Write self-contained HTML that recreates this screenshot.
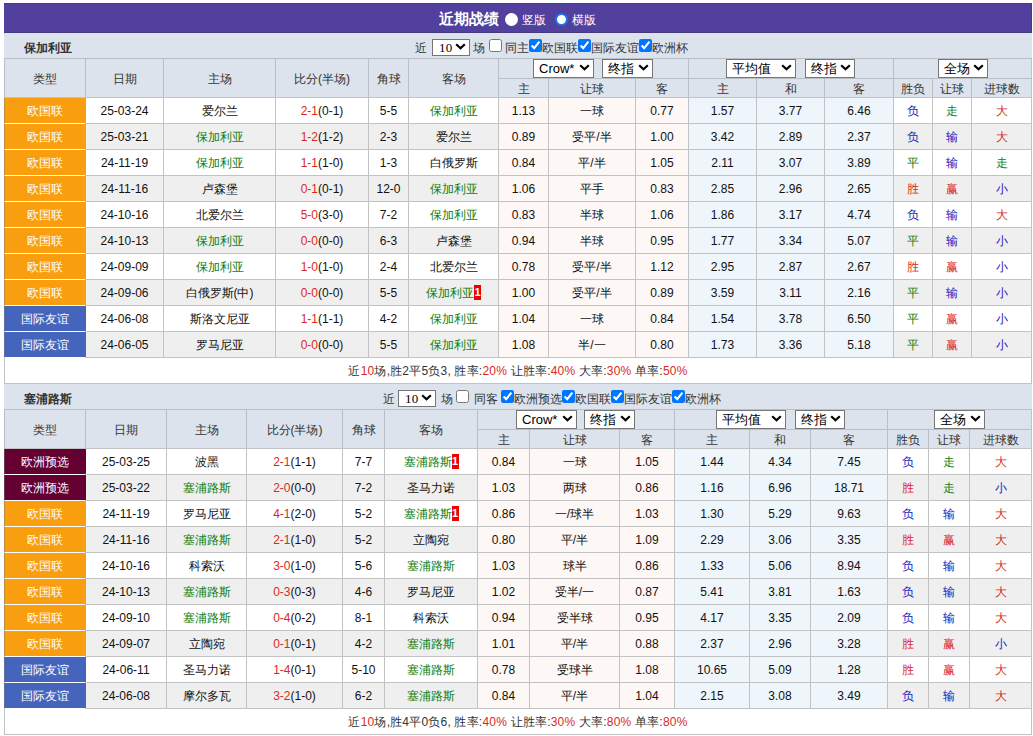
<!DOCTYPE html><html><head><meta charset="utf-8"><style>
*{margin:0;padding:0}
html,body{width:1033px;height:736px;overflow:hidden;background:#fff}
body{position:relative;font-family:"Liberation Sans",sans-serif;font-size:12px;color:#222}
body>div,body>span{position:absolute;white-space:nowrap;overflow:hidden}
.ttl{color:#fff;line-height:30px;font-size:12px}
.rad{position:absolute;width:13px;height:13px;border-radius:50%;background:#fff;box-sizing:border-box}
.rad.on{border:2px solid #1a73e8;background:#fff}
.ct{line-height:25px;color:#333}
.cb{position:absolute;width:13px;height:13px;margin:0}
.sm{position:absolute!important;height:17px!important;line-height:15px!important;border-radius:2px}
.sel{display:inline-block;box-sizing:border-box;height:17px;border:1px solid #767676;border-radius:0;background:#fff;color:#000;line-height:15px;text-align:left;padding-left:4px;position:relative;vertical-align:middle;font-size:13px}
.chev{position:absolute;right:3px;top:3px}
.hs .chev{top:4px;right:3px}
.mono{font-family:'Liberation Serif',serif;font-size:13px;letter-spacing:0.3px;position:absolute;left:6px;top:0px}
.sel.hs{position:absolute;height:19px;line-height:17px;font-size:13px;padding-left:5px}
.sum{text-align:center;line-height:27px;color:#333;letter-spacing:0.2px}
.rc{display:inline-block;background:#e00;color:#fff;font-size:12px;line-height:15px;width:7px;text-align:center;vertical-align:1px;font-weight:bold;font-size:11px}
</style></head><body><div style="left:4px;top:3px;width:1028px;height:30px;background:#52409e;box-sizing:border-box;border:1px solid #463a7c;border-left:none"></div><div class="ttl" style="left:439px;top:4px;height:30px;font-size:15px;font-weight:bold">近期战绩</div><div class="rad" style="left:505px;top:13px"></div><div class="ttl" style="left:522px;top:5px;height:30px">竖版</div><div class="rad on" style="left:555px;top:13px"></div><div class="ttl" style="left:572px;top:5px;height:30px">横版</div><div style="left:4px;top:33px;width:1028px;height:25px;background:#dce3ec"></div><div style="left:24px;top:36px;width:100px;height:22px;line-height:25px;font-weight:bold;color:#333">保加利亚</div><div class="ct" style="left:415px;top:36px;height:22px">近</div><span class="sel sm" style="left:432px;top:39px;width:38px"><span class="mono">10</span><svg class="chev" width="11" height="7" viewBox="0 0 11 7"><path d="M1.2 1.2 L5.5 5.3 L9.8 1.2" stroke="#000" stroke-width="2.2" fill="none"/></svg></span><div class="ct" style="left:473px;top:36px;height:22px">场</div><input type="checkbox" class="cb" style="left:489px;top:39px"><div class="ct" style="left:505px;top:36px;height:22px">同主</div><input type="checkbox" class="cb" style="left:529px;top:39px" checked><div class="ct" style="left:542px;top:36px;height:22px">欧国联</div><input type="checkbox" class="cb" style="left:578px;top:39px" checked><div class="ct" style="left:591px;top:36px;height:22px">国际友谊</div><input type="checkbox" class="cb" style="left:639px;top:39px" checked><div class="ct" style="left:652px;top:36px;height:22px">欧洲杯</div><div style="left:4px;top:58px;width:1028px;height:39px;background:#dce3ec"></div><div style="left:5px;top:59px;width:80px;height:38px;color:#333;line-height:40px;text-align:center;">类型</div><div style="left:86px;top:59px;width:77px;height:38px;color:#333;line-height:40px;text-align:center;">日期</div><div style="left:164px;top:59px;width:111px;height:38px;color:#333;line-height:40px;text-align:center;">主场</div><div style="left:276px;top:59px;width:92px;height:38px;color:#333;line-height:40px;text-align:center;">比分(半场)</div><div style="left:369px;top:59px;width:39px;height:38px;color:#333;line-height:40px;text-align:center;">角球</div><div style="left:409px;top:59px;width:89px;height:38px;color:#333;line-height:40px;text-align:center;">客场</div><div style="left:499px;top:79px;width:49px;height:18px;color:#333;line-height:20px;text-align:center;">主</div><div style="left:549px;top:79px;width:86px;height:18px;color:#333;line-height:20px;text-align:center;">让球</div><div style="left:636px;top:79px;width:52px;height:18px;color:#333;line-height:20px;text-align:center;">客</div><div style="left:689px;top:79px;width:67px;height:18px;color:#333;line-height:20px;text-align:center;">主</div><div style="left:757px;top:79px;width:67px;height:18px;color:#333;line-height:20px;text-align:center;">和</div><div style="left:825px;top:79px;width:68px;height:18px;color:#333;line-height:20px;text-align:center;">客</div><div style="left:894px;top:79px;width:38px;height:18px;color:#333;line-height:20px;text-align:center;">胜负</div><div style="left:933px;top:79px;width:38px;height:18px;color:#333;line-height:20px;text-align:center;">让球</div><div style="left:972px;top:79px;width:59px;height:18px;color:#333;line-height:20px;text-align:center;">进球数</div><div style="left:4px;top:98px;width:82px;height:25px;background:#f99e0e;color:#fff;line-height:27px;text-align:center;padding-right:1px;box-sizing:border-box">欧国联</div><div style="left:86px;top:98px;width:77px;height:25px;background:#fff;color:#111;line-height:27px;text-align:center;">25-03-24</div><div style="left:164px;top:98px;width:111px;height:25px;background:#fff;color:#111;line-height:27px;text-align:center;">爱尔兰</div><div style="left:276px;top:98px;width:92px;height:25px;background:#fff;color:#111;line-height:27px;text-align:center;"><span style="color:#d82a1c">2-1</span>(0-1)</div><div style="left:369px;top:98px;width:39px;height:25px;background:#fff;color:#111;line-height:27px;text-align:center;">5-5</div><div style="left:409px;top:98px;width:89px;height:25px;background:#fff;color:#111;line-height:27px;text-align:center;"><span style="color:#118011">保加利亚</span></div><div style="left:499px;top:98px;width:49px;height:25px;background:#fdf8f5;color:#111;line-height:27px;text-align:center;">1.13</div><div style="left:549px;top:98px;width:86px;height:25px;background:#fdf8f5;color:#111;line-height:27px;text-align:center;">一球</div><div style="left:636px;top:98px;width:52px;height:25px;background:#fdf8f5;color:#111;line-height:27px;text-align:center;">0.77</div><div style="left:689px;top:98px;width:67px;height:25px;background:#eef5fb;color:#111;line-height:27px;text-align:center;">1.57</div><div style="left:757px;top:98px;width:67px;height:25px;background:#eef5fb;color:#111;line-height:27px;text-align:center;">3.77</div><div style="left:825px;top:98px;width:68px;height:25px;background:#eef5fb;color:#111;line-height:27px;text-align:center;">6.46</div><div style="left:894px;top:98px;width:38px;height:25px;background:#fff;color:#1818c0;line-height:27px;text-align:center;">负</div><div style="left:933px;top:98px;width:38px;height:25px;background:#fff;color:#118011;line-height:27px;text-align:center;">走</div><div style="left:972px;top:98px;width:59px;height:25px;background:#fff;color:#d82a1c;line-height:27px;text-align:center;">大</div><div style="left:4px;top:124px;width:82px;height:25px;background:#f99e0e;color:#fff;line-height:27px;text-align:center;padding-right:1px;box-sizing:border-box">欧国联</div><div style="left:86px;top:124px;width:77px;height:25px;background:#efefef;color:#111;line-height:27px;text-align:center;">25-03-21</div><div style="left:164px;top:124px;width:111px;height:25px;background:#efefef;color:#111;line-height:27px;text-align:center;"><span style="color:#118011">保加利亚</span></div><div style="left:276px;top:124px;width:92px;height:25px;background:#efefef;color:#111;line-height:27px;text-align:center;"><span style="color:#d82a1c">1-2</span>(1-2)</div><div style="left:369px;top:124px;width:39px;height:25px;background:#efefef;color:#111;line-height:27px;text-align:center;">2-3</div><div style="left:409px;top:124px;width:89px;height:25px;background:#efefef;color:#111;line-height:27px;text-align:center;">爱尔兰</div><div style="left:499px;top:124px;width:49px;height:25px;background:#fdf8f5;color:#111;line-height:27px;text-align:center;">0.89</div><div style="left:549px;top:124px;width:86px;height:25px;background:#fdf8f5;color:#111;line-height:27px;text-align:center;">受平/半</div><div style="left:636px;top:124px;width:52px;height:25px;background:#fdf8f5;color:#111;line-height:27px;text-align:center;">1.00</div><div style="left:689px;top:124px;width:67px;height:25px;background:#eef5fb;color:#111;line-height:27px;text-align:center;">3.42</div><div style="left:757px;top:124px;width:67px;height:25px;background:#eef5fb;color:#111;line-height:27px;text-align:center;">2.89</div><div style="left:825px;top:124px;width:68px;height:25px;background:#eef5fb;color:#111;line-height:27px;text-align:center;">2.37</div><div style="left:894px;top:124px;width:38px;height:25px;background:#efefef;color:#1818c0;line-height:27px;text-align:center;">负</div><div style="left:933px;top:124px;width:38px;height:25px;background:#efefef;color:#1818c0;line-height:27px;text-align:center;">输</div><div style="left:972px;top:124px;width:59px;height:25px;background:#efefef;color:#d82a1c;line-height:27px;text-align:center;">大</div><div style="left:4px;top:150px;width:82px;height:25px;background:#f99e0e;color:#fff;line-height:27px;text-align:center;padding-right:1px;box-sizing:border-box">欧国联</div><div style="left:86px;top:150px;width:77px;height:25px;background:#fff;color:#111;line-height:27px;text-align:center;">24-11-19</div><div style="left:164px;top:150px;width:111px;height:25px;background:#fff;color:#111;line-height:27px;text-align:center;"><span style="color:#118011">保加利亚</span></div><div style="left:276px;top:150px;width:92px;height:25px;background:#fff;color:#111;line-height:27px;text-align:center;"><span style="color:#d82a1c">1-1</span>(1-0)</div><div style="left:369px;top:150px;width:39px;height:25px;background:#fff;color:#111;line-height:27px;text-align:center;">1-3</div><div style="left:409px;top:150px;width:89px;height:25px;background:#fff;color:#111;line-height:27px;text-align:center;">白俄罗斯</div><div style="left:499px;top:150px;width:49px;height:25px;background:#fdf8f5;color:#111;line-height:27px;text-align:center;">0.84</div><div style="left:549px;top:150px;width:86px;height:25px;background:#fdf8f5;color:#111;line-height:27px;text-align:center;">平/半</div><div style="left:636px;top:150px;width:52px;height:25px;background:#fdf8f5;color:#111;line-height:27px;text-align:center;">1.05</div><div style="left:689px;top:150px;width:67px;height:25px;background:#eef5fb;color:#111;line-height:27px;text-align:center;">2.11</div><div style="left:757px;top:150px;width:67px;height:25px;background:#eef5fb;color:#111;line-height:27px;text-align:center;">3.07</div><div style="left:825px;top:150px;width:68px;height:25px;background:#eef5fb;color:#111;line-height:27px;text-align:center;">3.89</div><div style="left:894px;top:150px;width:38px;height:25px;background:#fff;color:#118011;line-height:27px;text-align:center;">平</div><div style="left:933px;top:150px;width:38px;height:25px;background:#fff;color:#1818c0;line-height:27px;text-align:center;">输</div><div style="left:972px;top:150px;width:59px;height:25px;background:#fff;color:#118011;line-height:27px;text-align:center;">走</div><div style="left:4px;top:176px;width:82px;height:25px;background:#f99e0e;color:#fff;line-height:27px;text-align:center;padding-right:1px;box-sizing:border-box">欧国联</div><div style="left:86px;top:176px;width:77px;height:25px;background:#efefef;color:#111;line-height:27px;text-align:center;">24-11-16</div><div style="left:164px;top:176px;width:111px;height:25px;background:#efefef;color:#111;line-height:27px;text-align:center;">卢森堡</div><div style="left:276px;top:176px;width:92px;height:25px;background:#efefef;color:#111;line-height:27px;text-align:center;"><span style="color:#d82a1c">0-1</span>(0-1)</div><div style="left:369px;top:176px;width:39px;height:25px;background:#efefef;color:#111;line-height:27px;text-align:center;">12-0</div><div style="left:409px;top:176px;width:89px;height:25px;background:#efefef;color:#111;line-height:27px;text-align:center;"><span style="color:#118011">保加利亚</span></div><div style="left:499px;top:176px;width:49px;height:25px;background:#fdf8f5;color:#111;line-height:27px;text-align:center;">1.06</div><div style="left:549px;top:176px;width:86px;height:25px;background:#fdf8f5;color:#111;line-height:27px;text-align:center;">平手</div><div style="left:636px;top:176px;width:52px;height:25px;background:#fdf8f5;color:#111;line-height:27px;text-align:center;">0.83</div><div style="left:689px;top:176px;width:67px;height:25px;background:#eef5fb;color:#111;line-height:27px;text-align:center;">2.85</div><div style="left:757px;top:176px;width:67px;height:25px;background:#eef5fb;color:#111;line-height:27px;text-align:center;">2.96</div><div style="left:825px;top:176px;width:68px;height:25px;background:#eef5fb;color:#111;line-height:27px;text-align:center;">2.65</div><div style="left:894px;top:176px;width:38px;height:25px;background:#efefef;color:#d82a1c;line-height:27px;text-align:center;">胜</div><div style="left:933px;top:176px;width:38px;height:25px;background:#efefef;color:#d82a1c;line-height:27px;text-align:center;">赢</div><div style="left:972px;top:176px;width:59px;height:25px;background:#efefef;color:#1818c0;line-height:27px;text-align:center;">小</div><div style="left:4px;top:202px;width:82px;height:25px;background:#f99e0e;color:#fff;line-height:27px;text-align:center;padding-right:1px;box-sizing:border-box">欧国联</div><div style="left:86px;top:202px;width:77px;height:25px;background:#fff;color:#111;line-height:27px;text-align:center;">24-10-16</div><div style="left:164px;top:202px;width:111px;height:25px;background:#fff;color:#111;line-height:27px;text-align:center;">北爱尔兰</div><div style="left:276px;top:202px;width:92px;height:25px;background:#fff;color:#111;line-height:27px;text-align:center;"><span style="color:#d82a1c">5-0</span>(3-0)</div><div style="left:369px;top:202px;width:39px;height:25px;background:#fff;color:#111;line-height:27px;text-align:center;">7-2</div><div style="left:409px;top:202px;width:89px;height:25px;background:#fff;color:#111;line-height:27px;text-align:center;"><span style="color:#118011">保加利亚</span></div><div style="left:499px;top:202px;width:49px;height:25px;background:#fdf8f5;color:#111;line-height:27px;text-align:center;">0.83</div><div style="left:549px;top:202px;width:86px;height:25px;background:#fdf8f5;color:#111;line-height:27px;text-align:center;">半球</div><div style="left:636px;top:202px;width:52px;height:25px;background:#fdf8f5;color:#111;line-height:27px;text-align:center;">1.06</div><div style="left:689px;top:202px;width:67px;height:25px;background:#eef5fb;color:#111;line-height:27px;text-align:center;">1.86</div><div style="left:757px;top:202px;width:67px;height:25px;background:#eef5fb;color:#111;line-height:27px;text-align:center;">3.17</div><div style="left:825px;top:202px;width:68px;height:25px;background:#eef5fb;color:#111;line-height:27px;text-align:center;">4.74</div><div style="left:894px;top:202px;width:38px;height:25px;background:#fff;color:#1818c0;line-height:27px;text-align:center;">负</div><div style="left:933px;top:202px;width:38px;height:25px;background:#fff;color:#1818c0;line-height:27px;text-align:center;">输</div><div style="left:972px;top:202px;width:59px;height:25px;background:#fff;color:#d82a1c;line-height:27px;text-align:center;">大</div><div style="left:4px;top:228px;width:82px;height:25px;background:#f99e0e;color:#fff;line-height:27px;text-align:center;padding-right:1px;box-sizing:border-box">欧国联</div><div style="left:86px;top:228px;width:77px;height:25px;background:#efefef;color:#111;line-height:27px;text-align:center;">24-10-13</div><div style="left:164px;top:228px;width:111px;height:25px;background:#efefef;color:#111;line-height:27px;text-align:center;"><span style="color:#118011">保加利亚</span></div><div style="left:276px;top:228px;width:92px;height:25px;background:#efefef;color:#111;line-height:27px;text-align:center;"><span style="color:#d82a1c">0-0</span>(0-0)</div><div style="left:369px;top:228px;width:39px;height:25px;background:#efefef;color:#111;line-height:27px;text-align:center;">6-3</div><div style="left:409px;top:228px;width:89px;height:25px;background:#efefef;color:#111;line-height:27px;text-align:center;">卢森堡</div><div style="left:499px;top:228px;width:49px;height:25px;background:#fdf8f5;color:#111;line-height:27px;text-align:center;">0.94</div><div style="left:549px;top:228px;width:86px;height:25px;background:#fdf8f5;color:#111;line-height:27px;text-align:center;">半球</div><div style="left:636px;top:228px;width:52px;height:25px;background:#fdf8f5;color:#111;line-height:27px;text-align:center;">0.95</div><div style="left:689px;top:228px;width:67px;height:25px;background:#eef5fb;color:#111;line-height:27px;text-align:center;">1.77</div><div style="left:757px;top:228px;width:67px;height:25px;background:#eef5fb;color:#111;line-height:27px;text-align:center;">3.34</div><div style="left:825px;top:228px;width:68px;height:25px;background:#eef5fb;color:#111;line-height:27px;text-align:center;">5.07</div><div style="left:894px;top:228px;width:38px;height:25px;background:#efefef;color:#118011;line-height:27px;text-align:center;">平</div><div style="left:933px;top:228px;width:38px;height:25px;background:#efefef;color:#1818c0;line-height:27px;text-align:center;">输</div><div style="left:972px;top:228px;width:59px;height:25px;background:#efefef;color:#1818c0;line-height:27px;text-align:center;">小</div><div style="left:4px;top:254px;width:82px;height:25px;background:#f99e0e;color:#fff;line-height:27px;text-align:center;padding-right:1px;box-sizing:border-box">欧国联</div><div style="left:86px;top:254px;width:77px;height:25px;background:#fff;color:#111;line-height:27px;text-align:center;">24-09-09</div><div style="left:164px;top:254px;width:111px;height:25px;background:#fff;color:#111;line-height:27px;text-align:center;"><span style="color:#118011">保加利亚</span></div><div style="left:276px;top:254px;width:92px;height:25px;background:#fff;color:#111;line-height:27px;text-align:center;"><span style="color:#d82a1c">1-0</span>(1-0)</div><div style="left:369px;top:254px;width:39px;height:25px;background:#fff;color:#111;line-height:27px;text-align:center;">2-4</div><div style="left:409px;top:254px;width:89px;height:25px;background:#fff;color:#111;line-height:27px;text-align:center;">北爱尔兰</div><div style="left:499px;top:254px;width:49px;height:25px;background:#fdf8f5;color:#111;line-height:27px;text-align:center;">0.78</div><div style="left:549px;top:254px;width:86px;height:25px;background:#fdf8f5;color:#111;line-height:27px;text-align:center;">受平/半</div><div style="left:636px;top:254px;width:52px;height:25px;background:#fdf8f5;color:#111;line-height:27px;text-align:center;">1.12</div><div style="left:689px;top:254px;width:67px;height:25px;background:#eef5fb;color:#111;line-height:27px;text-align:center;">2.95</div><div style="left:757px;top:254px;width:67px;height:25px;background:#eef5fb;color:#111;line-height:27px;text-align:center;">2.87</div><div style="left:825px;top:254px;width:68px;height:25px;background:#eef5fb;color:#111;line-height:27px;text-align:center;">2.67</div><div style="left:894px;top:254px;width:38px;height:25px;background:#fff;color:#d82a1c;line-height:27px;text-align:center;">胜</div><div style="left:933px;top:254px;width:38px;height:25px;background:#fff;color:#d82a1c;line-height:27px;text-align:center;">赢</div><div style="left:972px;top:254px;width:59px;height:25px;background:#fff;color:#1818c0;line-height:27px;text-align:center;">小</div><div style="left:4px;top:280px;width:82px;height:25px;background:#f99e0e;color:#fff;line-height:27px;text-align:center;padding-right:1px;box-sizing:border-box">欧国联</div><div style="left:86px;top:280px;width:77px;height:25px;background:#efefef;color:#111;line-height:27px;text-align:center;">24-09-06</div><div style="left:164px;top:280px;width:111px;height:25px;background:#efefef;color:#111;line-height:27px;text-align:center;">白俄罗斯(中)</div><div style="left:276px;top:280px;width:92px;height:25px;background:#efefef;color:#111;line-height:27px;text-align:center;"><span style="color:#d82a1c">0-0</span>(0-0)</div><div style="left:369px;top:280px;width:39px;height:25px;background:#efefef;color:#111;line-height:27px;text-align:center;">5-5</div><div style="left:409px;top:280px;width:89px;height:25px;background:#efefef;color:#111;line-height:27px;text-align:center;"><span style="color:#118011">保加利亚</span><b class="rc">1</b></div><div style="left:499px;top:280px;width:49px;height:25px;background:#fdf8f5;color:#111;line-height:27px;text-align:center;">1.00</div><div style="left:549px;top:280px;width:86px;height:25px;background:#fdf8f5;color:#111;line-height:27px;text-align:center;">受平/半</div><div style="left:636px;top:280px;width:52px;height:25px;background:#fdf8f5;color:#111;line-height:27px;text-align:center;">0.89</div><div style="left:689px;top:280px;width:67px;height:25px;background:#eef5fb;color:#111;line-height:27px;text-align:center;">3.59</div><div style="left:757px;top:280px;width:67px;height:25px;background:#eef5fb;color:#111;line-height:27px;text-align:center;">3.11</div><div style="left:825px;top:280px;width:68px;height:25px;background:#eef5fb;color:#111;line-height:27px;text-align:center;">2.16</div><div style="left:894px;top:280px;width:38px;height:25px;background:#efefef;color:#118011;line-height:27px;text-align:center;">平</div><div style="left:933px;top:280px;width:38px;height:25px;background:#efefef;color:#1818c0;line-height:27px;text-align:center;">输</div><div style="left:972px;top:280px;width:59px;height:25px;background:#efefef;color:#1818c0;line-height:27px;text-align:center;">小</div><div style="left:4px;top:306px;width:82px;height:25px;background:#4565bd;color:#fff;line-height:27px;text-align:center;padding-right:1px;box-sizing:border-box">国际友谊</div><div style="left:86px;top:306px;width:77px;height:25px;background:#fff;color:#111;line-height:27px;text-align:center;">24-06-08</div><div style="left:164px;top:306px;width:111px;height:25px;background:#fff;color:#111;line-height:27px;text-align:center;">斯洛文尼亚</div><div style="left:276px;top:306px;width:92px;height:25px;background:#fff;color:#111;line-height:27px;text-align:center;"><span style="color:#d82a1c">1-1</span>(1-1)</div><div style="left:369px;top:306px;width:39px;height:25px;background:#fff;color:#111;line-height:27px;text-align:center;">4-2</div><div style="left:409px;top:306px;width:89px;height:25px;background:#fff;color:#111;line-height:27px;text-align:center;"><span style="color:#118011">保加利亚</span></div><div style="left:499px;top:306px;width:49px;height:25px;background:#fdf8f5;color:#111;line-height:27px;text-align:center;">1.04</div><div style="left:549px;top:306px;width:86px;height:25px;background:#fdf8f5;color:#111;line-height:27px;text-align:center;">一球</div><div style="left:636px;top:306px;width:52px;height:25px;background:#fdf8f5;color:#111;line-height:27px;text-align:center;">0.84</div><div style="left:689px;top:306px;width:67px;height:25px;background:#eef5fb;color:#111;line-height:27px;text-align:center;">1.54</div><div style="left:757px;top:306px;width:67px;height:25px;background:#eef5fb;color:#111;line-height:27px;text-align:center;">3.78</div><div style="left:825px;top:306px;width:68px;height:25px;background:#eef5fb;color:#111;line-height:27px;text-align:center;">6.50</div><div style="left:894px;top:306px;width:38px;height:25px;background:#fff;color:#118011;line-height:27px;text-align:center;">平</div><div style="left:933px;top:306px;width:38px;height:25px;background:#fff;color:#d82a1c;line-height:27px;text-align:center;">赢</div><div style="left:972px;top:306px;width:59px;height:25px;background:#fff;color:#1818c0;line-height:27px;text-align:center;">小</div><div style="left:4px;top:332px;width:82px;height:25px;background:#4565bd;color:#fff;line-height:27px;text-align:center;padding-right:1px;box-sizing:border-box">国际友谊</div><div style="left:86px;top:332px;width:77px;height:25px;background:#efefef;color:#111;line-height:27px;text-align:center;">24-06-05</div><div style="left:164px;top:332px;width:111px;height:25px;background:#efefef;color:#111;line-height:27px;text-align:center;">罗马尼亚</div><div style="left:276px;top:332px;width:92px;height:25px;background:#efefef;color:#111;line-height:27px;text-align:center;"><span style="color:#d82a1c">0-0</span>(0-0)</div><div style="left:369px;top:332px;width:39px;height:25px;background:#efefef;color:#111;line-height:27px;text-align:center;">5-5</div><div style="left:409px;top:332px;width:89px;height:25px;background:#efefef;color:#111;line-height:27px;text-align:center;"><span style="color:#118011">保加利亚</span></div><div style="left:499px;top:332px;width:49px;height:25px;background:#fdf8f5;color:#111;line-height:27px;text-align:center;">1.08</div><div style="left:549px;top:332px;width:86px;height:25px;background:#fdf8f5;color:#111;line-height:27px;text-align:center;">半/一</div><div style="left:636px;top:332px;width:52px;height:25px;background:#fdf8f5;color:#111;line-height:27px;text-align:center;">0.80</div><div style="left:689px;top:332px;width:67px;height:25px;background:#eef5fb;color:#111;line-height:27px;text-align:center;">1.73</div><div style="left:757px;top:332px;width:67px;height:25px;background:#eef5fb;color:#111;line-height:27px;text-align:center;">3.36</div><div style="left:825px;top:332px;width:68px;height:25px;background:#eef5fb;color:#111;line-height:27px;text-align:center;">5.18</div><div style="left:894px;top:332px;width:38px;height:25px;background:#efefef;color:#118011;line-height:27px;text-align:center;">平</div><div style="left:933px;top:332px;width:38px;height:25px;background:#efefef;color:#d82a1c;line-height:27px;text-align:center;">赢</div><div style="left:972px;top:332px;width:59px;height:25px;background:#efefef;color:#1818c0;line-height:27px;text-align:center;">小</div><div style="left:5px;top:358px;width:1026px;height:25px;background:#fff;line-height:25px;text-align:right;padding-right:0"></div><div class="sum" style="left:5px;top:358px;width:1026px;height:25px">近<span style="color:#d82a1c">10</span>场,胜2平5负3, 胜率:<span style="color:#d82a1c">20%</span> 让胜率:<span style="color:#d82a1c">40%</span> 大率:<span style="color:#d82a1c">30%</span> 单率:<span style="color:#d82a1c">50%</span></div><div style="left:4px;top:58px;width:1028px;height:1px;background:#b9bfc7"></div><div style="left:498px;top:78px;width:534px;height:1px;background:#b9bfc7"></div><div style="left:4px;top:97px;width:1028px;height:1px;background:#c2c2c2"></div><div style="left:85px;top:123px;width:947px;height:1px;background:#c2c2c2"></div><div style="left:5px;top:123px;width:80px;height:1px;background:rgba(255,255,255,0.5)"></div><div style="left:85px;top:149px;width:947px;height:1px;background:#c2c2c2"></div><div style="left:5px;top:149px;width:80px;height:1px;background:rgba(255,255,255,0.5)"></div><div style="left:85px;top:175px;width:947px;height:1px;background:#c2c2c2"></div><div style="left:5px;top:175px;width:80px;height:1px;background:rgba(255,255,255,0.5)"></div><div style="left:85px;top:201px;width:947px;height:1px;background:#c2c2c2"></div><div style="left:5px;top:201px;width:80px;height:1px;background:rgba(255,255,255,0.5)"></div><div style="left:85px;top:227px;width:947px;height:1px;background:#c2c2c2"></div><div style="left:5px;top:227px;width:80px;height:1px;background:rgba(255,255,255,0.5)"></div><div style="left:85px;top:253px;width:947px;height:1px;background:#c2c2c2"></div><div style="left:5px;top:253px;width:80px;height:1px;background:rgba(255,255,255,0.5)"></div><div style="left:85px;top:279px;width:947px;height:1px;background:#c2c2c2"></div><div style="left:5px;top:279px;width:80px;height:1px;background:rgba(255,255,255,0.5)"></div><div style="left:85px;top:305px;width:947px;height:1px;background:#c2c2c2"></div><div style="left:5px;top:305px;width:80px;height:1px;background:rgba(255,255,255,0.5)"></div><div style="left:85px;top:331px;width:947px;height:1px;background:#c2c2c2"></div><div style="left:5px;top:331px;width:80px;height:1px;background:rgba(255,255,255,0.5)"></div><div style="left:85px;top:357px;width:947px;height:1px;background:#c2c2c2"></div><div style="left:5px;top:357px;width:80px;height:1px;background:rgba(255,255,255,0.5)"></div><div style="left:4px;top:383px;width:1028px;height:1px;background:#c2c2c2"></div><div style="left:4px;top:58px;width:1px;height:40px;background:#b9bfc7"></div><div style="left:4px;top:98px;width:1px;height:260px;background:rgba(120,120,120,0.45)"></div><div style="left:4px;top:357px;width:1px;height:27px;background:#c2c2c2"></div><div style="left:85px;top:58px;width:1px;height:40px;background:#b9bfc7"></div><div style="left:163px;top:58px;width:1px;height:39px;background:#b9bfc7"></div><div style="left:163px;top:97px;width:1px;height:261px;background:#c2c2c2"></div><div style="left:275px;top:58px;width:1px;height:39px;background:#b9bfc7"></div><div style="left:275px;top:97px;width:1px;height:261px;background:#c2c2c2"></div><div style="left:368px;top:58px;width:1px;height:39px;background:#b9bfc7"></div><div style="left:368px;top:97px;width:1px;height:261px;background:#c2c2c2"></div><div style="left:408px;top:58px;width:1px;height:39px;background:#b9bfc7"></div><div style="left:408px;top:97px;width:1px;height:261px;background:#c2c2c2"></div><div style="left:498px;top:58px;width:1px;height:39px;background:#b9bfc7"></div><div style="left:498px;top:97px;width:1px;height:261px;background:#c2c2c2"></div><div style="left:548px;top:78px;width:1px;height:19px;background:#b9bfc7"></div><div style="left:548px;top:97px;width:1px;height:261px;background:#c2c2c2"></div><div style="left:635px;top:78px;width:1px;height:19px;background:#b9bfc7"></div><div style="left:635px;top:97px;width:1px;height:261px;background:#c2c2c2"></div><div style="left:688px;top:58px;width:1px;height:39px;background:#b9bfc7"></div><div style="left:688px;top:97px;width:1px;height:261px;background:#c2c2c2"></div><div style="left:756px;top:78px;width:1px;height:19px;background:#b9bfc7"></div><div style="left:756px;top:97px;width:1px;height:261px;background:#c2c2c2"></div><div style="left:824px;top:78px;width:1px;height:19px;background:#b9bfc7"></div><div style="left:824px;top:97px;width:1px;height:261px;background:#c2c2c2"></div><div style="left:893px;top:58px;width:1px;height:39px;background:#b9bfc7"></div><div style="left:893px;top:97px;width:1px;height:261px;background:#c2c2c2"></div><div style="left:932px;top:78px;width:1px;height:19px;background:#b9bfc7"></div><div style="left:932px;top:97px;width:1px;height:261px;background:#c2c2c2"></div><div style="left:971px;top:78px;width:1px;height:19px;background:#b9bfc7"></div><div style="left:971px;top:97px;width:1px;height:261px;background:#c2c2c2"></div><div style="left:1031px;top:58px;width:1px;height:326px;background:#c2c2c2"></div><div style="left:4px;top:384px;width:1028px;height:25px;background:#dce3ec"></div><div style="left:24px;top:387px;width:100px;height:22px;line-height:25px;font-weight:bold;color:#333">塞浦路斯</div><div class="ct" style="left:383px;top:387px;height:22px">近</div><span class="sel sm" style="left:398px;top:390px;width:38px"><span class="mono">10</span><svg class="chev" width="11" height="7" viewBox="0 0 11 7"><path d="M1.2 1.2 L5.5 5.3 L9.8 1.2" stroke="#000" stroke-width="2.2" fill="none"/></svg></span><div class="ct" style="left:441px;top:387px;height:22px">场</div><input type="checkbox" class="cb" style="left:456px;top:390px"><div class="ct" style="left:474px;top:387px;height:22px">同客</div><input type="checkbox" class="cb" style="left:501px;top:390px" checked><div class="ct" style="left:514px;top:387px;height:22px">欧洲预选</div><input type="checkbox" class="cb" style="left:562px;top:390px" checked><div class="ct" style="left:575px;top:387px;height:22px">欧国联</div><input type="checkbox" class="cb" style="left:611px;top:390px" checked><div class="ct" style="left:624px;top:387px;height:22px">国际友谊</div><input type="checkbox" class="cb" style="left:672px;top:390px" checked><div class="ct" style="left:685px;top:387px;height:22px">欧洲杯</div><div style="left:4px;top:409px;width:1028px;height:39px;background:#dce3ec"></div><div style="left:5px;top:410px;width:80px;height:38px;color:#333;line-height:40px;text-align:center;">类型</div><div style="left:86px;top:410px;width:80px;height:38px;color:#333;line-height:40px;text-align:center;">日期</div><div style="left:167px;top:410px;width:79px;height:38px;color:#333;line-height:40px;text-align:center;">主场</div><div style="left:247px;top:410px;width:95px;height:38px;color:#333;line-height:40px;text-align:center;">比分(半场)</div><div style="left:343px;top:410px;width:41px;height:38px;color:#333;line-height:40px;text-align:center;">角球</div><div style="left:385px;top:410px;width:92px;height:38px;color:#333;line-height:40px;text-align:center;">客场</div><div style="left:478px;top:430px;width:51px;height:18px;color:#333;line-height:20px;text-align:center;">主</div><div style="left:530px;top:430px;width:89px;height:18px;color:#333;line-height:20px;text-align:center;">让球</div><div style="left:620px;top:430px;width:54px;height:18px;color:#333;line-height:20px;text-align:center;">客</div><div style="left:675px;top:430px;width:74px;height:18px;color:#333;line-height:20px;text-align:center;">主</div><div style="left:750px;top:430px;width:60px;height:18px;color:#333;line-height:20px;text-align:center;">和</div><div style="left:811px;top:430px;width:76px;height:18px;color:#333;line-height:20px;text-align:center;">客</div><div style="left:888px;top:430px;width:40px;height:18px;color:#333;line-height:20px;text-align:center;">胜负</div><div style="left:929px;top:430px;width:40px;height:18px;color:#333;line-height:20px;text-align:center;">让球</div><div style="left:970px;top:430px;width:61px;height:18px;color:#333;line-height:20px;text-align:center;">进球数</div><div style="left:4px;top:449px;width:82px;height:25px;background:#650033;color:#fff;line-height:27px;text-align:center;padding-right:1px;box-sizing:border-box">欧洲预选</div><div style="left:86px;top:449px;width:80px;height:25px;background:#fff;color:#111;line-height:27px;text-align:center;">25-03-25</div><div style="left:167px;top:449px;width:79px;height:25px;background:#fff;color:#111;line-height:27px;text-align:center;">波黑</div><div style="left:247px;top:449px;width:95px;height:25px;background:#fff;color:#111;line-height:27px;text-align:center;"><span style="color:#d82a1c">2-1</span>(1-1)</div><div style="left:343px;top:449px;width:41px;height:25px;background:#fff;color:#111;line-height:27px;text-align:center;">7-7</div><div style="left:385px;top:449px;width:92px;height:25px;background:#fff;color:#111;line-height:27px;text-align:center;"><span style="color:#118011">塞浦路斯</span><b class="rc">1</b></div><div style="left:478px;top:449px;width:51px;height:25px;background:#fdf8f5;color:#111;line-height:27px;text-align:center;">0.84</div><div style="left:530px;top:449px;width:89px;height:25px;background:#fdf8f5;color:#111;line-height:27px;text-align:center;">一球</div><div style="left:620px;top:449px;width:54px;height:25px;background:#fdf8f5;color:#111;line-height:27px;text-align:center;">1.05</div><div style="left:675px;top:449px;width:74px;height:25px;background:#eef5fb;color:#111;line-height:27px;text-align:center;">1.44</div><div style="left:750px;top:449px;width:60px;height:25px;background:#eef5fb;color:#111;line-height:27px;text-align:center;">4.34</div><div style="left:811px;top:449px;width:76px;height:25px;background:#eef5fb;color:#111;line-height:27px;text-align:center;">7.45</div><div style="left:888px;top:449px;width:40px;height:25px;background:#fff;color:#1818c0;line-height:27px;text-align:center;">负</div><div style="left:929px;top:449px;width:40px;height:25px;background:#fff;color:#118011;line-height:27px;text-align:center;">走</div><div style="left:970px;top:449px;width:61px;height:25px;background:#fff;color:#d82a1c;line-height:27px;text-align:center;">大</div><div style="left:4px;top:475px;width:82px;height:25px;background:#650033;color:#fff;line-height:27px;text-align:center;padding-right:1px;box-sizing:border-box">欧洲预选</div><div style="left:86px;top:475px;width:80px;height:25px;background:#efefef;color:#111;line-height:27px;text-align:center;">25-03-22</div><div style="left:167px;top:475px;width:79px;height:25px;background:#efefef;color:#111;line-height:27px;text-align:center;"><span style="color:#118011">塞浦路斯</span></div><div style="left:247px;top:475px;width:95px;height:25px;background:#efefef;color:#111;line-height:27px;text-align:center;"><span style="color:#d82a1c">2-0</span>(0-0)</div><div style="left:343px;top:475px;width:41px;height:25px;background:#efefef;color:#111;line-height:27px;text-align:center;">7-2</div><div style="left:385px;top:475px;width:92px;height:25px;background:#efefef;color:#111;line-height:27px;text-align:center;">圣马力诺</div><div style="left:478px;top:475px;width:51px;height:25px;background:#fdf8f5;color:#111;line-height:27px;text-align:center;">1.03</div><div style="left:530px;top:475px;width:89px;height:25px;background:#fdf8f5;color:#111;line-height:27px;text-align:center;">两球</div><div style="left:620px;top:475px;width:54px;height:25px;background:#fdf8f5;color:#111;line-height:27px;text-align:center;">0.86</div><div style="left:675px;top:475px;width:74px;height:25px;background:#eef5fb;color:#111;line-height:27px;text-align:center;">1.16</div><div style="left:750px;top:475px;width:60px;height:25px;background:#eef5fb;color:#111;line-height:27px;text-align:center;">6.96</div><div style="left:811px;top:475px;width:76px;height:25px;background:#eef5fb;color:#111;line-height:27px;text-align:center;">18.71</div><div style="left:888px;top:475px;width:40px;height:25px;background:#efefef;color:#d82a1c;line-height:27px;text-align:center;">胜</div><div style="left:929px;top:475px;width:40px;height:25px;background:#efefef;color:#118011;line-height:27px;text-align:center;">走</div><div style="left:970px;top:475px;width:61px;height:25px;background:#efefef;color:#1818c0;line-height:27px;text-align:center;">小</div><div style="left:4px;top:501px;width:82px;height:25px;background:#f99e0e;color:#fff;line-height:27px;text-align:center;padding-right:1px;box-sizing:border-box">欧国联</div><div style="left:86px;top:501px;width:80px;height:25px;background:#fff;color:#111;line-height:27px;text-align:center;">24-11-19</div><div style="left:167px;top:501px;width:79px;height:25px;background:#fff;color:#111;line-height:27px;text-align:center;">罗马尼亚</div><div style="left:247px;top:501px;width:95px;height:25px;background:#fff;color:#111;line-height:27px;text-align:center;"><span style="color:#d82a1c">4-1</span>(2-0)</div><div style="left:343px;top:501px;width:41px;height:25px;background:#fff;color:#111;line-height:27px;text-align:center;">5-2</div><div style="left:385px;top:501px;width:92px;height:25px;background:#fff;color:#111;line-height:27px;text-align:center;"><span style="color:#118011">塞浦路斯</span><b class="rc">1</b></div><div style="left:478px;top:501px;width:51px;height:25px;background:#fdf8f5;color:#111;line-height:27px;text-align:center;">0.86</div><div style="left:530px;top:501px;width:89px;height:25px;background:#fdf8f5;color:#111;line-height:27px;text-align:center;">一/球半</div><div style="left:620px;top:501px;width:54px;height:25px;background:#fdf8f5;color:#111;line-height:27px;text-align:center;">1.03</div><div style="left:675px;top:501px;width:74px;height:25px;background:#eef5fb;color:#111;line-height:27px;text-align:center;">1.30</div><div style="left:750px;top:501px;width:60px;height:25px;background:#eef5fb;color:#111;line-height:27px;text-align:center;">5.29</div><div style="left:811px;top:501px;width:76px;height:25px;background:#eef5fb;color:#111;line-height:27px;text-align:center;">9.63</div><div style="left:888px;top:501px;width:40px;height:25px;background:#fff;color:#1818c0;line-height:27px;text-align:center;">负</div><div style="left:929px;top:501px;width:40px;height:25px;background:#fff;color:#1818c0;line-height:27px;text-align:center;">输</div><div style="left:970px;top:501px;width:61px;height:25px;background:#fff;color:#d82a1c;line-height:27px;text-align:center;">大</div><div style="left:4px;top:527px;width:82px;height:25px;background:#f99e0e;color:#fff;line-height:27px;text-align:center;padding-right:1px;box-sizing:border-box">欧国联</div><div style="left:86px;top:527px;width:80px;height:25px;background:#efefef;color:#111;line-height:27px;text-align:center;">24-11-16</div><div style="left:167px;top:527px;width:79px;height:25px;background:#efefef;color:#111;line-height:27px;text-align:center;"><span style="color:#118011">塞浦路斯</span></div><div style="left:247px;top:527px;width:95px;height:25px;background:#efefef;color:#111;line-height:27px;text-align:center;"><span style="color:#d82a1c">2-1</span>(1-0)</div><div style="left:343px;top:527px;width:41px;height:25px;background:#efefef;color:#111;line-height:27px;text-align:center;">5-2</div><div style="left:385px;top:527px;width:92px;height:25px;background:#efefef;color:#111;line-height:27px;text-align:center;">立陶宛</div><div style="left:478px;top:527px;width:51px;height:25px;background:#fdf8f5;color:#111;line-height:27px;text-align:center;">0.80</div><div style="left:530px;top:527px;width:89px;height:25px;background:#fdf8f5;color:#111;line-height:27px;text-align:center;">平/半</div><div style="left:620px;top:527px;width:54px;height:25px;background:#fdf8f5;color:#111;line-height:27px;text-align:center;">1.09</div><div style="left:675px;top:527px;width:74px;height:25px;background:#eef5fb;color:#111;line-height:27px;text-align:center;">2.29</div><div style="left:750px;top:527px;width:60px;height:25px;background:#eef5fb;color:#111;line-height:27px;text-align:center;">3.06</div><div style="left:811px;top:527px;width:76px;height:25px;background:#eef5fb;color:#111;line-height:27px;text-align:center;">3.35</div><div style="left:888px;top:527px;width:40px;height:25px;background:#efefef;color:#d82a1c;line-height:27px;text-align:center;">胜</div><div style="left:929px;top:527px;width:40px;height:25px;background:#efefef;color:#d82a1c;line-height:27px;text-align:center;">赢</div><div style="left:970px;top:527px;width:61px;height:25px;background:#efefef;color:#d82a1c;line-height:27px;text-align:center;">大</div><div style="left:4px;top:553px;width:82px;height:25px;background:#f99e0e;color:#fff;line-height:27px;text-align:center;padding-right:1px;box-sizing:border-box">欧国联</div><div style="left:86px;top:553px;width:80px;height:25px;background:#fff;color:#111;line-height:27px;text-align:center;">24-10-16</div><div style="left:167px;top:553px;width:79px;height:25px;background:#fff;color:#111;line-height:27px;text-align:center;">科索沃</div><div style="left:247px;top:553px;width:95px;height:25px;background:#fff;color:#111;line-height:27px;text-align:center;"><span style="color:#d82a1c">3-0</span>(1-0)</div><div style="left:343px;top:553px;width:41px;height:25px;background:#fff;color:#111;line-height:27px;text-align:center;">5-6</div><div style="left:385px;top:553px;width:92px;height:25px;background:#fff;color:#111;line-height:27px;text-align:center;"><span style="color:#118011">塞浦路斯</span></div><div style="left:478px;top:553px;width:51px;height:25px;background:#fdf8f5;color:#111;line-height:27px;text-align:center;">1.03</div><div style="left:530px;top:553px;width:89px;height:25px;background:#fdf8f5;color:#111;line-height:27px;text-align:center;">球半</div><div style="left:620px;top:553px;width:54px;height:25px;background:#fdf8f5;color:#111;line-height:27px;text-align:center;">0.86</div><div style="left:675px;top:553px;width:74px;height:25px;background:#eef5fb;color:#111;line-height:27px;text-align:center;">1.33</div><div style="left:750px;top:553px;width:60px;height:25px;background:#eef5fb;color:#111;line-height:27px;text-align:center;">5.06</div><div style="left:811px;top:553px;width:76px;height:25px;background:#eef5fb;color:#111;line-height:27px;text-align:center;">8.94</div><div style="left:888px;top:553px;width:40px;height:25px;background:#fff;color:#1818c0;line-height:27px;text-align:center;">负</div><div style="left:929px;top:553px;width:40px;height:25px;background:#fff;color:#1818c0;line-height:27px;text-align:center;">输</div><div style="left:970px;top:553px;width:61px;height:25px;background:#fff;color:#d82a1c;line-height:27px;text-align:center;">大</div><div style="left:4px;top:579px;width:82px;height:25px;background:#f99e0e;color:#fff;line-height:27px;text-align:center;padding-right:1px;box-sizing:border-box">欧国联</div><div style="left:86px;top:579px;width:80px;height:25px;background:#efefef;color:#111;line-height:27px;text-align:center;">24-10-13</div><div style="left:167px;top:579px;width:79px;height:25px;background:#efefef;color:#111;line-height:27px;text-align:center;"><span style="color:#118011">塞浦路斯</span></div><div style="left:247px;top:579px;width:95px;height:25px;background:#efefef;color:#111;line-height:27px;text-align:center;"><span style="color:#d82a1c">0-3</span>(0-3)</div><div style="left:343px;top:579px;width:41px;height:25px;background:#efefef;color:#111;line-height:27px;text-align:center;">4-6</div><div style="left:385px;top:579px;width:92px;height:25px;background:#efefef;color:#111;line-height:27px;text-align:center;">罗马尼亚</div><div style="left:478px;top:579px;width:51px;height:25px;background:#fdf8f5;color:#111;line-height:27px;text-align:center;">1.02</div><div style="left:530px;top:579px;width:89px;height:25px;background:#fdf8f5;color:#111;line-height:27px;text-align:center;">受半/一</div><div style="left:620px;top:579px;width:54px;height:25px;background:#fdf8f5;color:#111;line-height:27px;text-align:center;">0.87</div><div style="left:675px;top:579px;width:74px;height:25px;background:#eef5fb;color:#111;line-height:27px;text-align:center;">5.41</div><div style="left:750px;top:579px;width:60px;height:25px;background:#eef5fb;color:#111;line-height:27px;text-align:center;">3.81</div><div style="left:811px;top:579px;width:76px;height:25px;background:#eef5fb;color:#111;line-height:27px;text-align:center;">1.63</div><div style="left:888px;top:579px;width:40px;height:25px;background:#efefef;color:#1818c0;line-height:27px;text-align:center;">负</div><div style="left:929px;top:579px;width:40px;height:25px;background:#efefef;color:#1818c0;line-height:27px;text-align:center;">输</div><div style="left:970px;top:579px;width:61px;height:25px;background:#efefef;color:#d82a1c;line-height:27px;text-align:center;">大</div><div style="left:4px;top:605px;width:82px;height:25px;background:#f99e0e;color:#fff;line-height:27px;text-align:center;padding-right:1px;box-sizing:border-box">欧国联</div><div style="left:86px;top:605px;width:80px;height:25px;background:#fff;color:#111;line-height:27px;text-align:center;">24-09-10</div><div style="left:167px;top:605px;width:79px;height:25px;background:#fff;color:#111;line-height:27px;text-align:center;"><span style="color:#118011">塞浦路斯</span></div><div style="left:247px;top:605px;width:95px;height:25px;background:#fff;color:#111;line-height:27px;text-align:center;"><span style="color:#d82a1c">0-4</span>(0-2)</div><div style="left:343px;top:605px;width:41px;height:25px;background:#fff;color:#111;line-height:27px;text-align:center;">8-1</div><div style="left:385px;top:605px;width:92px;height:25px;background:#fff;color:#111;line-height:27px;text-align:center;">科索沃</div><div style="left:478px;top:605px;width:51px;height:25px;background:#fdf8f5;color:#111;line-height:27px;text-align:center;">0.94</div><div style="left:530px;top:605px;width:89px;height:25px;background:#fdf8f5;color:#111;line-height:27px;text-align:center;">受半球</div><div style="left:620px;top:605px;width:54px;height:25px;background:#fdf8f5;color:#111;line-height:27px;text-align:center;">0.95</div><div style="left:675px;top:605px;width:74px;height:25px;background:#eef5fb;color:#111;line-height:27px;text-align:center;">4.17</div><div style="left:750px;top:605px;width:60px;height:25px;background:#eef5fb;color:#111;line-height:27px;text-align:center;">3.35</div><div style="left:811px;top:605px;width:76px;height:25px;background:#eef5fb;color:#111;line-height:27px;text-align:center;">2.09</div><div style="left:888px;top:605px;width:40px;height:25px;background:#fff;color:#1818c0;line-height:27px;text-align:center;">负</div><div style="left:929px;top:605px;width:40px;height:25px;background:#fff;color:#1818c0;line-height:27px;text-align:center;">输</div><div style="left:970px;top:605px;width:61px;height:25px;background:#fff;color:#d82a1c;line-height:27px;text-align:center;">大</div><div style="left:4px;top:631px;width:82px;height:25px;background:#f99e0e;color:#fff;line-height:27px;text-align:center;padding-right:1px;box-sizing:border-box">欧国联</div><div style="left:86px;top:631px;width:80px;height:25px;background:#efefef;color:#111;line-height:27px;text-align:center;">24-09-07</div><div style="left:167px;top:631px;width:79px;height:25px;background:#efefef;color:#111;line-height:27px;text-align:center;">立陶宛</div><div style="left:247px;top:631px;width:95px;height:25px;background:#efefef;color:#111;line-height:27px;text-align:center;"><span style="color:#d82a1c">0-1</span>(0-1)</div><div style="left:343px;top:631px;width:41px;height:25px;background:#efefef;color:#111;line-height:27px;text-align:center;">4-2</div><div style="left:385px;top:631px;width:92px;height:25px;background:#efefef;color:#111;line-height:27px;text-align:center;"><span style="color:#118011">塞浦路斯</span></div><div style="left:478px;top:631px;width:51px;height:25px;background:#fdf8f5;color:#111;line-height:27px;text-align:center;">1.01</div><div style="left:530px;top:631px;width:89px;height:25px;background:#fdf8f5;color:#111;line-height:27px;text-align:center;">平/半</div><div style="left:620px;top:631px;width:54px;height:25px;background:#fdf8f5;color:#111;line-height:27px;text-align:center;">0.88</div><div style="left:675px;top:631px;width:74px;height:25px;background:#eef5fb;color:#111;line-height:27px;text-align:center;">2.37</div><div style="left:750px;top:631px;width:60px;height:25px;background:#eef5fb;color:#111;line-height:27px;text-align:center;">2.96</div><div style="left:811px;top:631px;width:76px;height:25px;background:#eef5fb;color:#111;line-height:27px;text-align:center;">3.28</div><div style="left:888px;top:631px;width:40px;height:25px;background:#efefef;color:#d82a1c;line-height:27px;text-align:center;">胜</div><div style="left:929px;top:631px;width:40px;height:25px;background:#efefef;color:#d82a1c;line-height:27px;text-align:center;">赢</div><div style="left:970px;top:631px;width:61px;height:25px;background:#efefef;color:#1818c0;line-height:27px;text-align:center;">小</div><div style="left:4px;top:657px;width:82px;height:25px;background:#4565bd;color:#fff;line-height:27px;text-align:center;padding-right:1px;box-sizing:border-box">国际友谊</div><div style="left:86px;top:657px;width:80px;height:25px;background:#fff;color:#111;line-height:27px;text-align:center;">24-06-11</div><div style="left:167px;top:657px;width:79px;height:25px;background:#fff;color:#111;line-height:27px;text-align:center;">圣马力诺</div><div style="left:247px;top:657px;width:95px;height:25px;background:#fff;color:#111;line-height:27px;text-align:center;"><span style="color:#d82a1c">1-4</span>(0-1)</div><div style="left:343px;top:657px;width:41px;height:25px;background:#fff;color:#111;line-height:27px;text-align:center;">5-10</div><div style="left:385px;top:657px;width:92px;height:25px;background:#fff;color:#111;line-height:27px;text-align:center;"><span style="color:#118011">塞浦路斯</span></div><div style="left:478px;top:657px;width:51px;height:25px;background:#fdf8f5;color:#111;line-height:27px;text-align:center;">0.78</div><div style="left:530px;top:657px;width:89px;height:25px;background:#fdf8f5;color:#111;line-height:27px;text-align:center;">受球半</div><div style="left:620px;top:657px;width:54px;height:25px;background:#fdf8f5;color:#111;line-height:27px;text-align:center;">1.08</div><div style="left:675px;top:657px;width:74px;height:25px;background:#eef5fb;color:#111;line-height:27px;text-align:center;">10.65</div><div style="left:750px;top:657px;width:60px;height:25px;background:#eef5fb;color:#111;line-height:27px;text-align:center;">5.09</div><div style="left:811px;top:657px;width:76px;height:25px;background:#eef5fb;color:#111;line-height:27px;text-align:center;">1.28</div><div style="left:888px;top:657px;width:40px;height:25px;background:#fff;color:#d82a1c;line-height:27px;text-align:center;">胜</div><div style="left:929px;top:657px;width:40px;height:25px;background:#fff;color:#d82a1c;line-height:27px;text-align:center;">赢</div><div style="left:970px;top:657px;width:61px;height:25px;background:#fff;color:#d82a1c;line-height:27px;text-align:center;">大</div><div style="left:4px;top:683px;width:82px;height:25px;background:#4565bd;color:#fff;line-height:27px;text-align:center;padding-right:1px;box-sizing:border-box">国际友谊</div><div style="left:86px;top:683px;width:80px;height:25px;background:#efefef;color:#111;line-height:27px;text-align:center;">24-06-08</div><div style="left:167px;top:683px;width:79px;height:25px;background:#efefef;color:#111;line-height:27px;text-align:center;">摩尔多瓦</div><div style="left:247px;top:683px;width:95px;height:25px;background:#efefef;color:#111;line-height:27px;text-align:center;"><span style="color:#d82a1c">3-2</span>(1-0)</div><div style="left:343px;top:683px;width:41px;height:25px;background:#efefef;color:#111;line-height:27px;text-align:center;">6-2</div><div style="left:385px;top:683px;width:92px;height:25px;background:#efefef;color:#111;line-height:27px;text-align:center;"><span style="color:#118011">塞浦路斯</span></div><div style="left:478px;top:683px;width:51px;height:25px;background:#fdf8f5;color:#111;line-height:27px;text-align:center;">0.84</div><div style="left:530px;top:683px;width:89px;height:25px;background:#fdf8f5;color:#111;line-height:27px;text-align:center;">平/半</div><div style="left:620px;top:683px;width:54px;height:25px;background:#fdf8f5;color:#111;line-height:27px;text-align:center;">1.04</div><div style="left:675px;top:683px;width:74px;height:25px;background:#eef5fb;color:#111;line-height:27px;text-align:center;">2.15</div><div style="left:750px;top:683px;width:60px;height:25px;background:#eef5fb;color:#111;line-height:27px;text-align:center;">3.08</div><div style="left:811px;top:683px;width:76px;height:25px;background:#eef5fb;color:#111;line-height:27px;text-align:center;">3.49</div><div style="left:888px;top:683px;width:40px;height:25px;background:#efefef;color:#1818c0;line-height:27px;text-align:center;">负</div><div style="left:929px;top:683px;width:40px;height:25px;background:#efefef;color:#1818c0;line-height:27px;text-align:center;">输</div><div style="left:970px;top:683px;width:61px;height:25px;background:#efefef;color:#d82a1c;line-height:27px;text-align:center;">大</div><div style="left:5px;top:709px;width:1026px;height:25px;background:#fff;line-height:25px;text-align:right;padding-right:0"></div><div class="sum" style="left:5px;top:709px;width:1026px;height:25px">近<span style="color:#d82a1c">10</span>场,胜4平0负6, 胜率:<span style="color:#d82a1c">40%</span> 让胜率:<span style="color:#d82a1c">30%</span> 大率:<span style="color:#d82a1c">80%</span> 单率:<span style="color:#d82a1c">80%</span></div><div style="left:4px;top:409px;width:1028px;height:1px;background:#b9bfc7"></div><div style="left:477px;top:429px;width:555px;height:1px;background:#b9bfc7"></div><div style="left:4px;top:448px;width:1028px;height:1px;background:#c2c2c2"></div><div style="left:85px;top:474px;width:947px;height:1px;background:#c2c2c2"></div><div style="left:5px;top:474px;width:80px;height:1px;background:rgba(255,255,255,0.5)"></div><div style="left:85px;top:500px;width:947px;height:1px;background:#c2c2c2"></div><div style="left:5px;top:500px;width:80px;height:1px;background:rgba(255,255,255,0.5)"></div><div style="left:85px;top:526px;width:947px;height:1px;background:#c2c2c2"></div><div style="left:5px;top:526px;width:80px;height:1px;background:rgba(255,255,255,0.5)"></div><div style="left:85px;top:552px;width:947px;height:1px;background:#c2c2c2"></div><div style="left:5px;top:552px;width:80px;height:1px;background:rgba(255,255,255,0.5)"></div><div style="left:85px;top:578px;width:947px;height:1px;background:#c2c2c2"></div><div style="left:5px;top:578px;width:80px;height:1px;background:rgba(255,255,255,0.5)"></div><div style="left:85px;top:604px;width:947px;height:1px;background:#c2c2c2"></div><div style="left:5px;top:604px;width:80px;height:1px;background:rgba(255,255,255,0.5)"></div><div style="left:85px;top:630px;width:947px;height:1px;background:#c2c2c2"></div><div style="left:5px;top:630px;width:80px;height:1px;background:rgba(255,255,255,0.5)"></div><div style="left:85px;top:656px;width:947px;height:1px;background:#c2c2c2"></div><div style="left:5px;top:656px;width:80px;height:1px;background:rgba(255,255,255,0.5)"></div><div style="left:85px;top:682px;width:947px;height:1px;background:#c2c2c2"></div><div style="left:5px;top:682px;width:80px;height:1px;background:rgba(255,255,255,0.5)"></div><div style="left:85px;top:708px;width:947px;height:1px;background:#c2c2c2"></div><div style="left:5px;top:708px;width:80px;height:1px;background:rgba(255,255,255,0.5)"></div><div style="left:4px;top:734px;width:1028px;height:1px;background:#c2c2c2"></div><div style="left:4px;top:409px;width:1px;height:40px;background:#b9bfc7"></div><div style="left:4px;top:449px;width:1px;height:260px;background:rgba(120,120,120,0.45)"></div><div style="left:4px;top:708px;width:1px;height:27px;background:#c2c2c2"></div><div style="left:85px;top:409px;width:1px;height:40px;background:#b9bfc7"></div><div style="left:166px;top:409px;width:1px;height:39px;background:#b9bfc7"></div><div style="left:166px;top:448px;width:1px;height:261px;background:#c2c2c2"></div><div style="left:246px;top:409px;width:1px;height:39px;background:#b9bfc7"></div><div style="left:246px;top:448px;width:1px;height:261px;background:#c2c2c2"></div><div style="left:342px;top:409px;width:1px;height:39px;background:#b9bfc7"></div><div style="left:342px;top:448px;width:1px;height:261px;background:#c2c2c2"></div><div style="left:384px;top:409px;width:1px;height:39px;background:#b9bfc7"></div><div style="left:384px;top:448px;width:1px;height:261px;background:#c2c2c2"></div><div style="left:477px;top:409px;width:1px;height:39px;background:#b9bfc7"></div><div style="left:477px;top:448px;width:1px;height:261px;background:#c2c2c2"></div><div style="left:529px;top:429px;width:1px;height:19px;background:#b9bfc7"></div><div style="left:529px;top:448px;width:1px;height:261px;background:#c2c2c2"></div><div style="left:619px;top:429px;width:1px;height:19px;background:#b9bfc7"></div><div style="left:619px;top:448px;width:1px;height:261px;background:#c2c2c2"></div><div style="left:674px;top:409px;width:1px;height:39px;background:#b9bfc7"></div><div style="left:674px;top:448px;width:1px;height:261px;background:#c2c2c2"></div><div style="left:749px;top:429px;width:1px;height:19px;background:#b9bfc7"></div><div style="left:749px;top:448px;width:1px;height:261px;background:#c2c2c2"></div><div style="left:810px;top:429px;width:1px;height:19px;background:#b9bfc7"></div><div style="left:810px;top:448px;width:1px;height:261px;background:#c2c2c2"></div><div style="left:887px;top:409px;width:1px;height:39px;background:#b9bfc7"></div><div style="left:887px;top:448px;width:1px;height:261px;background:#c2c2c2"></div><div style="left:928px;top:429px;width:1px;height:19px;background:#b9bfc7"></div><div style="left:928px;top:448px;width:1px;height:261px;background:#c2c2c2"></div><div style="left:969px;top:429px;width:1px;height:19px;background:#b9bfc7"></div><div style="left:969px;top:448px;width:1px;height:261px;background:#c2c2c2"></div><div style="left:1031px;top:409px;width:1px;height:326px;background:#c2c2c2"></div><span class="sel hs" style="left:533px;top:59px;width:61px">Crow*<svg class="chev" width="11" height="7" viewBox="0 0 11 7"><path d="M1.2 1.2 L5.5 5.3 L9.8 1.2" stroke="#000" stroke-width="2.2" fill="none"/></svg></span><span class="sel hs" style="left:602px;top:59px;width:51px">终指<svg class="chev" width="11" height="7" viewBox="0 0 11 7"><path d="M1.2 1.2 L5.5 5.3 L9.8 1.2" stroke="#000" stroke-width="2.2" fill="none"/></svg></span><span class="sel hs" style="left:726px;top:59px;width:70px">平均值<svg class="chev" width="11" height="7" viewBox="0 0 11 7"><path d="M1.2 1.2 L5.5 5.3 L9.8 1.2" stroke="#000" stroke-width="2.2" fill="none"/></svg></span><span class="sel hs" style="left:805px;top:59px;width:50px">终指<svg class="chev" width="11" height="7" viewBox="0 0 11 7"><path d="M1.2 1.2 L5.5 5.3 L9.8 1.2" stroke="#000" stroke-width="2.2" fill="none"/></svg></span><span class="sel hs" style="left:938px;top:59px;width:50px">全场<svg class="chev" width="11" height="7" viewBox="0 0 11 7"><path d="M1.2 1.2 L5.5 5.3 L9.8 1.2" stroke="#000" stroke-width="2.2" fill="none"/></svg></span><span class="sel hs" style="left:516px;top:410px;width:61px">Crow*<svg class="chev" width="11" height="7" viewBox="0 0 11 7"><path d="M1.2 1.2 L5.5 5.3 L9.8 1.2" stroke="#000" stroke-width="2.2" fill="none"/></svg></span><span class="sel hs" style="left:584px;top:410px;width:51px">终指<svg class="chev" width="11" height="7" viewBox="0 0 11 7"><path d="M1.2 1.2 L5.5 5.3 L9.8 1.2" stroke="#000" stroke-width="2.2" fill="none"/></svg></span><span class="sel hs" style="left:716px;top:410px;width:70px">平均值<svg class="chev" width="11" height="7" viewBox="0 0 11 7"><path d="M1.2 1.2 L5.5 5.3 L9.8 1.2" stroke="#000" stroke-width="2.2" fill="none"/></svg></span><span class="sel hs" style="left:795px;top:410px;width:50px">终指<svg class="chev" width="11" height="7" viewBox="0 0 11 7"><path d="M1.2 1.2 L5.5 5.3 L9.8 1.2" stroke="#000" stroke-width="2.2" fill="none"/></svg></span><span class="sel hs" style="left:934px;top:410px;width:51px">全场<svg class="chev" width="11" height="7" viewBox="0 0 11 7"><path d="M1.2 1.2 L5.5 5.3 L9.8 1.2" stroke="#000" stroke-width="2.2" fill="none"/></svg></span></body></html>
